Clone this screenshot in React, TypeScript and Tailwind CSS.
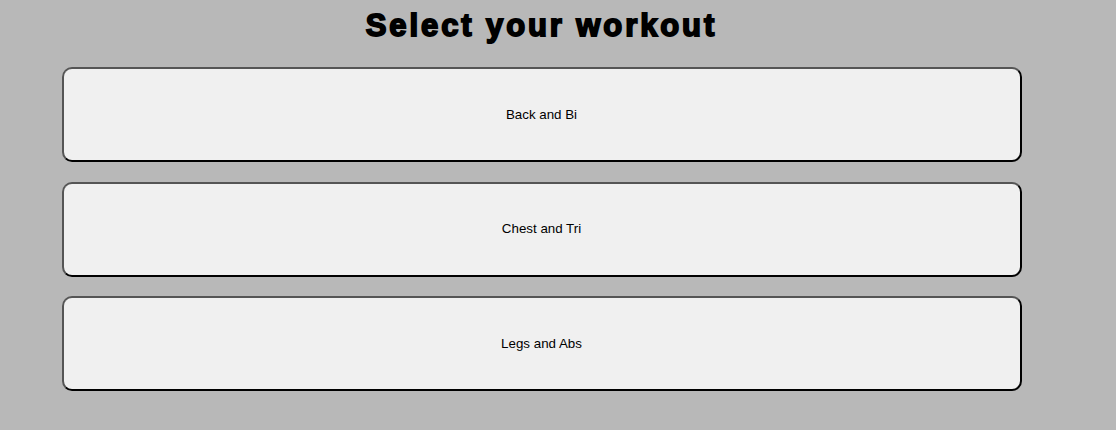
const WORKOUTS = ["Back and Bi", "Chest and Tri", "Legs and Abs"];

export default function App() {
  return (
    <div className="min-h-[430px] w-full bg-[#b8b8b8] font-['Liberation_Sans',Arial,sans-serif] text-black">
      <div className="w-[1083px] flex flex-col items-center pt-[10px]">
        <h1 className="text-[31px] leading-[31px] font-bold tracking-[2.9px] [-webkit-text-stroke:1.8px_black] whitespace-nowrap">
          Select your workout
        </h1>
        <div className="mt-[26px] flex flex-col gap-[19.5px]">
          {WORKOUTS.map((w) => (
            <button
              key={w}
              className="w-[960px] h-[95px] rounded-[10px] bg-[#f0f0f0] border-2 border-t-[#555555] border-l-[#555555] border-b-black border-r-black text-[13.33px] text-black cursor-pointer"
            >
              {w}
            </button>
          ))}
        </div>
      </div>
    </div>
  );
}
